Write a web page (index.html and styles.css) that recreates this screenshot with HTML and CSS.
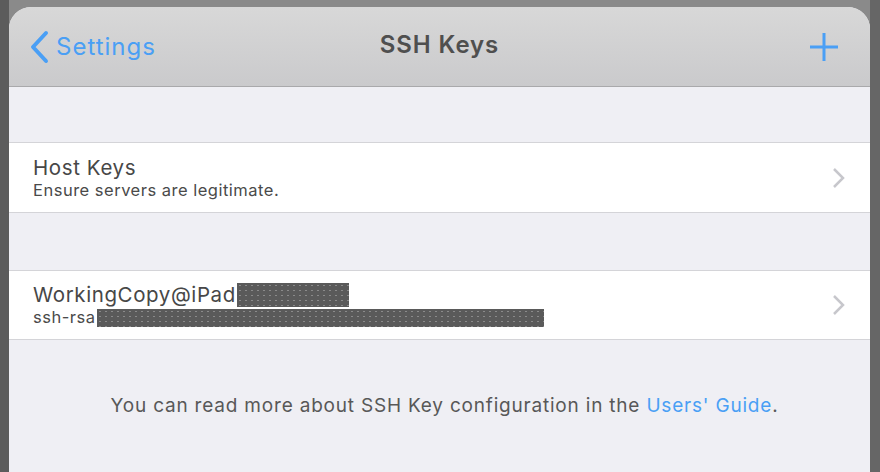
FILE: index.html
```html
<!DOCTYPE html>
<html>
<head>
<meta charset="utf-8">
<link rel="stylesheet" href="styles.css">
</head>
<body>
<div class="screen">
  <div class="panel">
    <header class="navbar">
      <div class="back">
        <svg class="back-chev" width="20" height="34" viewBox="0 0 20 34"><path d="M17 3 L4 17 L17 31" fill="none" stroke="#4a9ff5" stroke-width="4" stroke-linecap="round" stroke-linejoin="round"/></svg>
        <span class="back-label">Settings</span>
      </div>
      <div class="title">SSH Keys</div>
      <div class="add">
        <svg width="30" height="30" viewBox="0 0 30 30"><path d="M15 1 V29 M1 15 H29" stroke="#4a9ff5" stroke-width="3"/></svg>
      </div>
    </header>
    <div class="gap gap-first"></div>
    <div class="row">
      <div class="row-text">
        <div class="row-title">Host Keys</div>
        <div class="row-sub">Ensure servers are legitimate.</div>
      </div>
      <svg class="chev" width="14" height="22" viewBox="0 0 14 22"><path d="M2 2 L11 11 L2 20" fill="none" stroke="#c7c7cc" stroke-width="2.5"/></svg>
    </div>
    <div class="gap"></div>
    <div class="row row-b">
      <div class="row-text">
        <div class="row-title">WorkingCopy@iPad<span class="redact redact-a"></span></div>
        <div class="row-sub">ssh-rsa<span class="redact redact-b"></span></div>
      </div>
      <svg class="chev" width="14" height="22" viewBox="0 0 14 22"><path d="M2 2 L11 11 L2 20" fill="none" stroke="#c7c7cc" stroke-width="2.5"/></svg>
    </div>
    <p class="footer">You can read more about SSH Key configuration in the <span class="link">Users' Guide</span>.</p>
  </div>
</div>
</body>
</html>
```

FILE: styles.css
```css
* { box-sizing: border-box; }
html, body { margin: 0; padding: 0; }
body {
  width: 880px;
  height: 472px;
  overflow: hidden;
  background: #8a8a8a;
  font-family: "Inter", "Liberation Sans", sans-serif;
}
.screen {
  height: 472px;
  padding: 7px 10px 0 9px;
  background: linear-gradient(to right, #5c5c5c 0, #5c5c5c 9px, #8a8a8a 9px, #8a8a8a 870px, #666 870px);
}
.panel {
  height: 100%;
  background: #efeff4;
  border-radius: 22px 22px 0 0;
  overflow: hidden;
  display: flex;
  flex-direction: column;
}
.navbar {
  height: 80px;
  flex: none;
  background: linear-gradient(to bottom, #d8d8d8, #cacacc);
  border-bottom: 1px solid #a9a9ab;
  display: flex;
  align-items: center;
  padding: 0 31px 0 20px;
  position: relative;
}
.back {
  display: flex;
  align-items: center;
  gap: 7px;
  flex: 1;
}
.back-label {
  color: #4a9ff5;
  font-size: 24px;
  letter-spacing: 1px;
}
.title {
  position: absolute;
  left: 0; right: 0;
  text-align: center;
  font-size: 24px;
  font-weight: 600;
  letter-spacing: 0.9px;
  color: #4f4f4f;
  pointer-events: none;
  top: 23px;
}
.add { display: flex; align-items: center; }
.gap { height: 57px; flex: none; }
.gap-first { height: 55px; }
.row {
  height: 71px;
  flex: none;
  background: #fff;
  border-top: 1px solid #d4d4d8;
  border-bottom: 1px solid #d4d4d8;
  display: flex;
  align-items: center;
  padding: 0 24px 0 24px;
}
.row-b { height: 70px; }
.row-text { flex: 1; }
.row-title {
  font-size: 20.5px;
  letter-spacing: 0.6px;
  color: #474747;
  line-height: 25px;
  display: flex;
  align-items: center;
}
.row-sub {
  font-size: 16.5px;
  letter-spacing: 0.5px;
  color: #4a4a4a;
  line-height: 21px;
  display: flex;
  align-items: center;
}
.redact {
  display: inline-block;
  background: #5a5a5a;
  background-image: radial-gradient(circle, #8a8a8a 0.6px, transparent 0.8px);
  background-size: 6px 5px;
}
.redact-a { width: 112px; height: 24px; margin-left: 1px; }
.redact-b { width: 447px; height: 18px; margin-left: 2px; }
.chev { flex: none; }
.footer {
  margin: 54px 0 0 0;
  padding-left: 10px;
  text-align: center;
  font-size: 19px;
  letter-spacing: 0.8px;
  color: #585858;
}
.link { color: #4a9ff5; }
```
